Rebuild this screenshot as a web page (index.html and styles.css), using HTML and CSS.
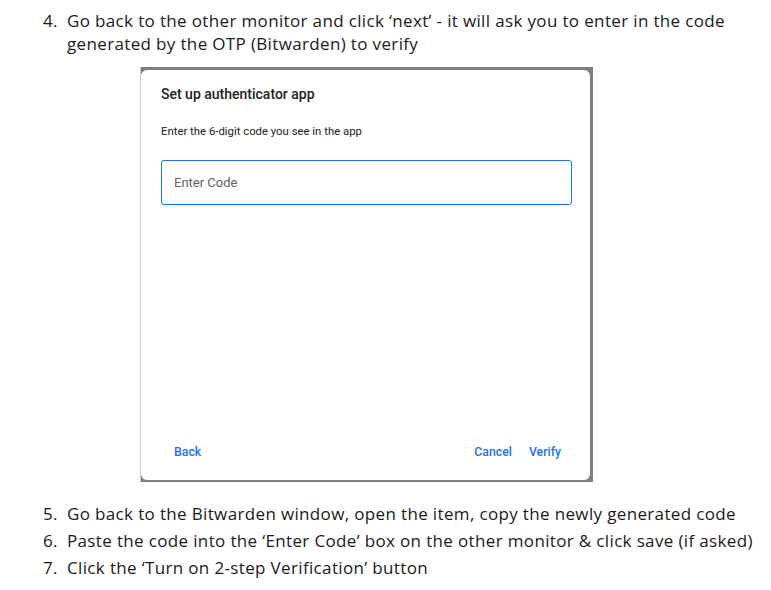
FILE: index.html
```html
<!DOCTYPE html>
<html lang="en">
<head>
<meta charset="utf-8">
<title>Set up authenticator</title>
<link rel="stylesheet" href="styles.css">
</head>
<body>
<ol class="steps steps-first">
  <li class="step" data-n="4.">Go back to the other monitor and click ‘next’ - it will ask you to enter in the code generated by the OTP (Bitwarden) to verify</li>
</ol>
<figure class="shot">
  <div class="dialog">
    <h2 class="dialog-title">Set up authenticator app</h2>
    <p class="dialog-text">Enter the 6-digit code you see in the app</p>
    <div class="code-input"><span class="placeholder">Enter Code</span></div>
    <div class="actions">
      <span class="btn">Back</span>
      <span class="spacer"></span>
      <span class="btn">Cancel</span>
      <span class="btn">Verify</span>
    </div>
  </div>
</figure>
<ol class="steps steps-rest">
  <li class="step" data-n="5.">Go back to the Bitwarden window, open the item, copy the newly generated code</li>
  <li class="step" data-n="6.">Paste the code into the ‘Enter Code’ box on the other monitor &amp; click save (if asked)</li>
  <li class="step" data-n="7.">Click the ‘Turn on 2-step Verification’ button</li>
</ol>
</body>
</html>
```
FILE: styles.css
```css
html, body {
  margin: 0;
  padding: 0;
  background: #ffffff;
}

body {
  width: 771px;
  height: 590px;
  overflow: hidden;
  font-family: "Open Sans", "DejaVu Sans", sans-serif;
  color: #1a1a1a;
}

.steps {
  list-style: none;
  margin: 0;
  padding: 0 0 0 43px;
  width: 722px;
  font-size: 17px;
  letter-spacing: 0.35px;
  line-height: 23px;
}

.steps-first {
  padding-top: 9px;
}

.steps-rest {
  margin-top: 20px;
}

.step {
  display: grid;
  grid-template-columns: 24px 1fr;
  margin-bottom: 4px;
}

.step::before {
  content: attr(data-n);
}

.shot {
  margin: 12px 0 0 140px;
  width: 449px;
  height: 410px;
  padding: 3px 3px 2px 0;
  background: #7e7e7e;
  border-left: 1px solid #c9c9c9;
}

.dialog {
  box-sizing: border-box;
  height: 100%;
  background: #ffffff;
  border-radius: 6px;
  padding: 16px 18px 21px 20px;
  display: flex;
  flex-direction: column;
  font-family: Roboto, "Liberation Sans", sans-serif;
}

.dialog-title {
  margin: 0;
  font-size: 14px;
  line-height: 16px;
  font-weight: 500;
  color: #202124;
}

.dialog-text {
  margin: 22px 0 0;
  font-size: 11.35px;
  line-height: 14px;
  color: #202124;
}

.code-input {
  margin-top: 22px;
  height: 45px;
  box-sizing: border-box;
  border: 1.5px solid #1a73e8;
  border-radius: 3px;
  display: flex;
  align-items: center;
  padding-left: 12px;
}

.placeholder {
  font-size: 13px;
  color: #5f6368;
}

.actions {
  margin-top: auto;
  display: flex;
  align-items: center;
  gap: 17px;
  padding: 0 11px 0 13px;
  font-size: 12.3px;
  line-height: 14px;
  font-weight: 500;
  color: #1a73e8;
}

.spacer {
  flex: 1;
}
```
